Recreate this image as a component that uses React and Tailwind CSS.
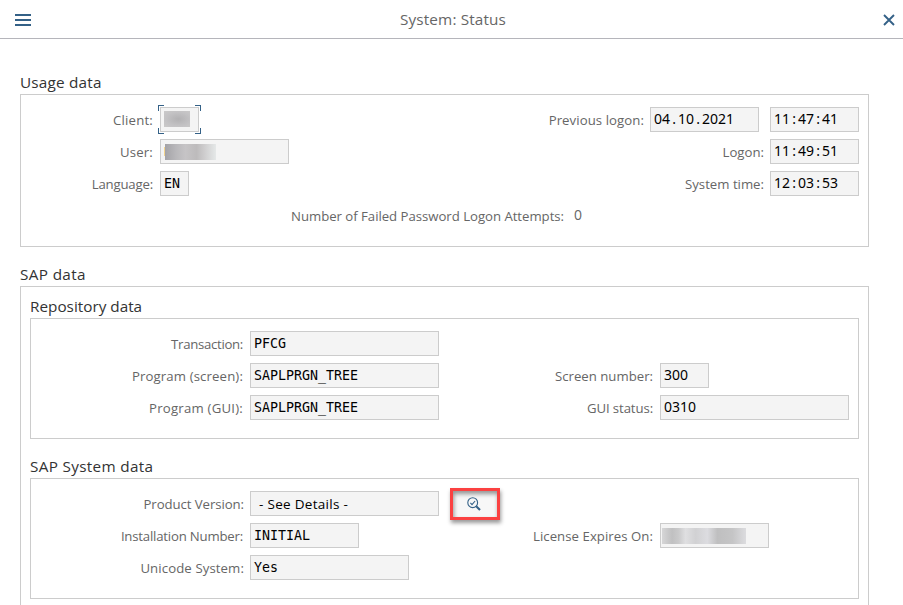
function Label({ children, className = "" }) {
  return (
    <span className={`shrink-0 whitespace-nowrap pt-px text-right text-[13.2px] leading-[25px] text-[#666666] ${className}`}>
      {children}
    </span>
  );
}

const boxClass = "h-[25px] shrink-0 border border-[#cccccc] bg-[#f4f4f4]";

// Identifier value in the fixed-pitch face
function Code({ width, className = "", children }) {
  return (
    <div className={`${boxClass} ${width} ${className} overflow-hidden whitespace-pre pl-[3px] font-['DejaVu_Sans_Mono',monospace] text-[13.3px] leading-[23px] text-black`}>
      {children}
    </div>
  );
}

// Digits are 8px wide; separators get a cell of the same width
function Digits({ value }) {
  return value
    .split(/([.:])/)
    .map((part, i) =>
      part === "." || part === ":" ? (
        <span key={i} className="inline-block w-2 text-center">{part}</span>
      ) : (
        part
      )
    );
}

function NumberField({ width, className = "", value }) {
  return (
    <div className={`${boxClass} ${width} ${className} whitespace-nowrap pl-[3px] font-['Noto_Sans',sans-serif] text-[14px] leading-[22px] text-black`}>
      <Digits value={value} />
    </div>
  );
}

function Group({ title, titleClass = "", className = "", bodyClass = "", children }) {
  return (
    <section className={`flex flex-col ${className}`}>
      <h2 className={`h-6 text-[15.3px] leading-[25px] text-[#333333] ${titleClass}`}>{title}</h2>
      <div className={`border border-[#cccccc] ${bodyClass}`}>{children}</div>
    </section>
  );
}

function Row({ children }) {
  return <div className="flex h-[25px] items-start">{children}</div>;
}

const corner = "absolute size-[6px] border-[#346187]";

export default function App() {
  return (
    <div className="flex h-[605px] w-[903px] flex-col overflow-hidden bg-white font-['Open_Sans',sans-serif]">
      <header className="flex h-[39px] shrink-0 items-center justify-between border-b border-[#b5b5bb] pl-[15px] pr-2">
        <svg width="16" height="12" viewBox="0 0 16 12" className="mt-[2px]" fill="#346187">
          <rect width="16" height="2" />
          <rect y="5" width="16" height="2" />
          <rect y="10" width="16" height="2" />
        </svg>
        <h1 className="mr-[8px] text-[15.3px] leading-6 tracking-[0.15px] text-[#666666]">System: Status</h1>
        <svg width="12" height="12" viewBox="0 0 12 12" className="mt-[2px]" stroke="#346187" strokeWidth="1.9" fill="none">
          <path d="M1 1 11 11M11 1 1 11" />
        </svg>
      </header>

      <main className="flex flex-col gap-[15px] pl-5 pt-[31px]">
        <Group title="Usage data" titleClass="tracking-[0.2px]" className="w-[849px]" bodyClass="flex h-[153px] flex-col gap-[7px] pt-3">
          <Row>
            <Label className="w-[132px] tracking-[0.2px]">Client:</Label>
            <div className="relative ml-[7px]">
              <div className={`${boxClass} w-[39px] pl-[3px] pt-[3px]`}>
                <div className="h-4 w-[26px] bg-[radial-gradient(ellipse_at_55%_50%,#b2b1b3_0%,#c3c2c4_60%,#cbcaca_100%)]" />
              </div>
              <i className={`${corner} -left-[2px] -top-[2px] border-l border-t`} />
              <i className={`${corner} -right-[2px] -top-[2px] border-r border-t`} />
              <i className={`${corner} -bottom-[2px] -left-[2px] border-b border-l`} />
              <i className={`${corner} -bottom-[2px] -right-[2px] border-b border-r`} />
            </div>
            <Label className="ml-auto tracking-[0.07px]">Previous logon:</Label>
            <NumberField width="w-[109px]" className="ml-[6px]" value="04.10.2021" />
            <NumberField width="w-[89px]" className="ml-[11px] mr-[9px]" value="11:47:41" />
          </Row>
          <Row>
            <Label className="w-[132px] tracking-[0.15px]">User:</Label>
            <div className={`${boxClass} ml-[7px] flex w-[129px] pl-[3px] pt-[4px]`}>
              <div className="mt-[3px] h-[9px] w-px bg-[#f5d58e]" />
              <div className="h-4 w-[51px] bg-[linear-gradient(90deg,#a4a3a7_0%,#b9b8bb_22%,#c6c4c6_40%,#bdbbbc_62%,#cfcecf_78%,#e5e8e8_100%)]" />
            </div>
            <Label className="ml-auto">Logon:</Label>
            <NumberField width="w-[89px]" className="ml-[6px] mr-[9px]" value="11:49:51" />
          </Row>
          <Row>
            <Label className="w-[132px] tracking-[-0.18px]">Language:</Label>
            <Code width="w-[29px]" className="ml-[7px]">EN</Code>
            <Label className="ml-auto">System time:</Label>
            <NumberField width="w-[89px]" className="ml-[6px] mr-[9px]" value="12:03:53" />
          </Row>
          <Row>
            <Label className="ml-[270px] w-[273px] tracking-[-0.03px]">Number of Failed Password Logon Attempts:</Label>
            <span className="ml-[10px] text-[14px] leading-6 text-[#666666]">0</span>
          </Row>
        </Group>

        <Group title="SAP data" titleClass="tracking-[0.35px]" className="w-[849px]" bodyClass="flex h-[340px] flex-col gap-[15px] px-[9px] pt-[7px]">
          <Group title="Repository data" bodyClass="flex h-[121px] flex-col gap-[7px] pt-3">
            <Row>
              <Label className="w-[212px] tracking-[-0.3px]">Transaction:</Label>
              <Code width="w-[189px]" className="ml-[7px]">PFCG</Code>
            </Row>
            <Row>
              <Label className="w-[212px] tracking-[0.13px]">Program (screen):</Label>
              <Code width="w-[189px]" className="ml-[7px]">SAPLPRGN_TREE</Code>
              <Label className="w-[214px]">Screen number:</Label>
              <NumberField width="w-[49px]" className="ml-[7px]" value="300" />
            </Row>
            <Row>
              <Label className="w-[212px] tracking-[0.22px]">Program (GUI):</Label>
              <Code width="w-[189px]" className="ml-[7px]">SAPLPRGN_TREE</Code>
              <Label className="w-[214px] tracking-[-0.1px]">GUI status:</Label>
              <NumberField width="w-[189px]" className="ml-[7px]" value="0310" />
            </Row>
          </Group>

          <Group title="SAP System data" titleClass="tracking-[0.32px]" bodyClass="flex h-[121px] flex-col gap-[7px] pt-3">
            <Row>
              <Label className="w-[213px] tracking-[-0.07px]">Product Version:</Label>
              <div className={`${boxClass} ml-[6px] w-[189px] whitespace-nowrap pl-[8px] pt-px text-[13.5px] leading-[23px] tracking-[0.3px] text-black`}>
                - See Details -
              </div>
              <button className="relative -my-[3px] ml-[11px] flex h-8 w-[50px] items-center justify-center border-[3px] border-[#fb4141] bg-[#f7f7f7] shadow-[1px_3px_4px_rgba(0,0,0,0.4),inset_1px_3px_4px_rgba(0,0,0,0.4)]">
                <svg width="14" height="14" viewBox="0 0 14 14" fill="none" stroke="#346187" className="-ml-[3px]">
                  <circle cx="5.7" cy="5.7" r="4.9" strokeWidth="1.1" />
                  <path d="M3.4 5.9 5 7.6 8.1 4" strokeWidth="1.1" />
                  <path d="M9.2 9.2 13 13" strokeWidth="2.1" />
                </svg>
              </button>
            </Row>
            <Row>
              <Label className="w-[212px] tracking-[-0.2px]">Installation Number:</Label>
              <Code width="w-[109px]" className="ml-[7px]">INITIAL</Code>
              <Label className="w-[294px] tracking-[0.05px]">License Expires On:</Label>
              <div className={`${boxClass} ml-[7px] w-[109px] pl-px pt-[4px]`}>
                <div className="h-4 w-[84px] bg-[linear-gradient(90deg,#d6d6d7_0%,#c0c0c1_12%,#cacacb_20%,#dfdfe1_28%,#d1d1d3_40%,#dcdce0_54%,#bfbfc0_66%,#c5c5c6_84%,#dcdcdf_100%)]" />
              </div>
            </Row>
            <Row>
              <Label className="w-[213px] tracking-[0.1px]">Unicode System:</Label>
              <Code width="w-[159px]" className="ml-[6px]">Yes</Code>
            </Row>
          </Group>
        </Group>
      </main>
    </div>
  );
}
